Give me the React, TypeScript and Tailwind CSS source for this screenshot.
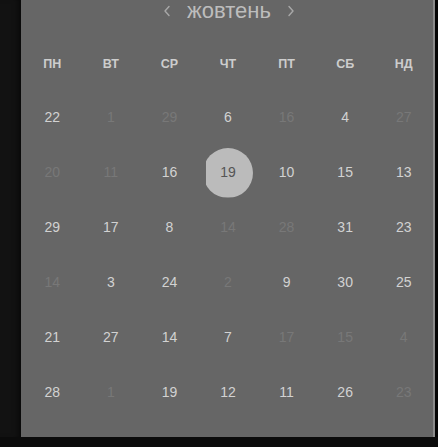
type Day = { n: number; dim?: boolean; sel?: boolean }

const weekDays = ['ПН', 'ВТ', 'СР', 'ЧТ', 'ПТ', 'СБ', 'НД']

const d = (n: number): Day => ({ n, dim: true })
const b = (n: number): Day => ({ n })

const rows: Day[][] = [
  [b(22), d(1), d(29), b(6), d(16), b(4), d(27)],
  [d(20), d(11), b(16), { n: 19, sel: true }, b(10), b(15), b(13)],
  [b(29), b(17), b(8), d(14), d(28), b(31), b(23)],
  [d(14), b(3), b(24), d(2), b(9), b(30), b(25)],
  [b(21), b(27), b(14), b(7), d(17), d(15), d(4)],
  [b(28), d(1), b(19), b(12), b(11), b(26), d(23)],
]

function Chevron({ dir }: { dir: 'left' | 'right' }) {
  return (
    <svg width="8" height="12" viewBox="0 0 8 12" fill="none" className="text-[#a8a8a8]">
      <path
        d={dir === 'left' ? 'M6 1.5 L2 6 L6 10.5' : 'M2 1.5 L6 6 L2 10.5'}
        stroke="currentColor"
        strokeWidth="1.4"
        strokeLinecap="round"
        strokeLinejoin="round"
      />
    </svg>
  )
}

export default function App() {
  return (
    <div
      className="w-[438px] h-[447px] bg-[#0b0b0b] overflow-hidden"
      style={{ fontFamily: '"Liberation Sans", Arial, sans-serif' }}
    >
      <div className="flex h-[437px]">
        <div className="w-[21px] bg-[#121212] shadow-[inset_-6px_0_6px_-4px_rgba(0,0,0,0.6)]" />
        <div className="w-[414px] bg-[#666666] border-r-2 border-[#8a8a8a] flex flex-col pl-[2px]">
          <div className="h-[20px] pt-[2px] flex items-center justify-center gap-[16px] pl-[2px]">
            <Chevron dir="left" />
            <span className="text-[22px] leading-[16px] text-[#bdbdbd]">жовтень</span>
            <Chevron dir="right" />
          </div>
          <div className="mt-[18px] h-[52px] grid grid-cols-7 items-center">
            {weekDays.map((w) => (
              <div key={w} className="text-center text-[12.5px] font-bold text-[#cdcdcd]">
                {w}
              </div>
            ))}
          </div>
          {rows.map((row, i) => (
            <div key={i} className="h-[55px] grid grid-cols-7 items-center">
              {row.map((day, j) => (
                <div key={j} className="relative flex items-center justify-center h-full">
                  {day.sel && (
                    <div className="absolute left-1/2 top-1/2 -translate-x-1/2 -translate-y-1/2 w-[50px] h-[50px] rounded-full bg-[#bbbbbb] [clip-path:inset(0_0_0_3px)]" />
                  )}
                  <span
                    className={
                      'relative text-[14px] ' +
                      (day.sel ? 'text-[#555555]' : day.dim ? 'text-[#787878]' : 'text-[#d2d2d2]')
                    }
                  >
                    {day.n}
                  </span>
                </div>
              ))}
            </div>
          ))}
        </div>
        <div className="flex-1 bg-[#050505]" />
      </div>
    </div>
  )
}
